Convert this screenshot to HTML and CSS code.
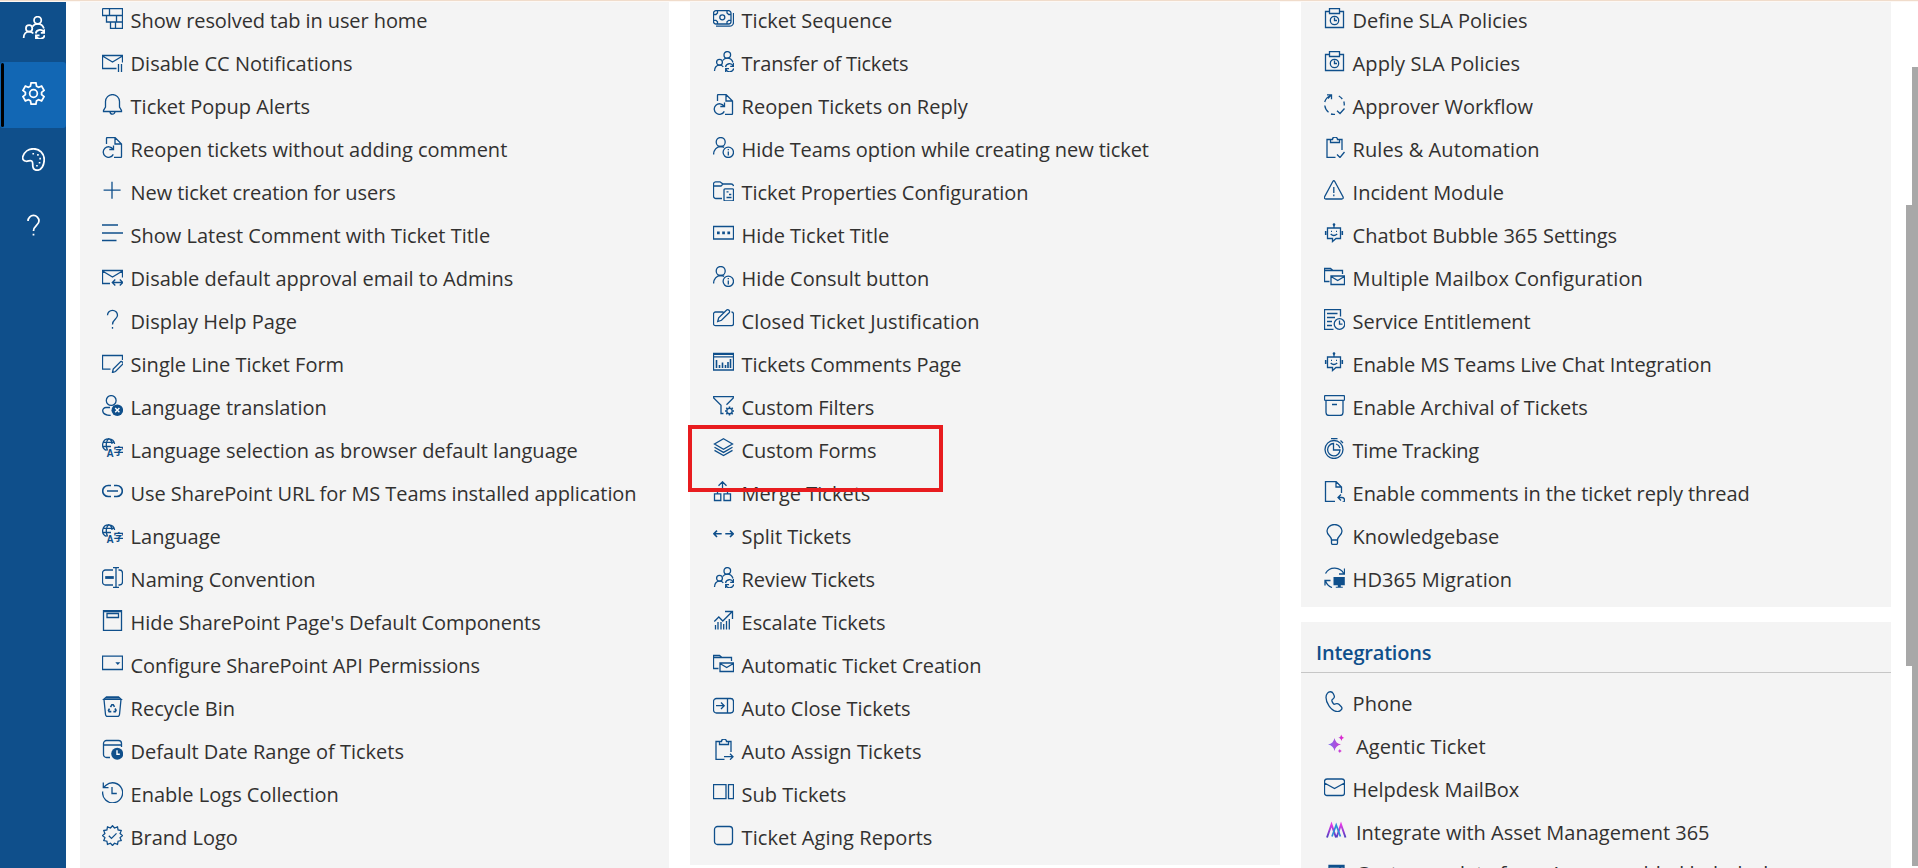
FILE: index.html
```html
<!DOCTYPE html>
<html lang="en">
<head>
<meta charset="utf-8">
<title>Settings</title>
<link rel="stylesheet" href="styles.css">
</head>
<body>
<svg class="sprite" aria-hidden="true">
  <defs>
    <linearGradient id="spark" x1="0" y1="0" x2="1" y2="0"><stop offset="0" stop-color="#7a6cf0"/><stop offset=".6" stop-color="#b846d8"/><stop offset="1" stop-color="#f012c8"/></linearGradient>
    <linearGradient id="asset" x1="0" y1="0" x2="0" y2="1"><stop offset="0" stop-color="#e23be6"/><stop offset="1" stop-color="#4a3fc0"/></linearGradient>
  </defs>
  <symbol id="cascade" viewBox="0 0 21 21"><path d="M.5.5h20v20H8.500V14M.5.500V7.500h20M7.500.500v7M4.500 7.500V14h16M14.500 7.500V14M13.500 14v6.500"/></symbol>
  <symbol id="mail-pause" viewBox="0 0 21 21"><path d="M14.500 17.500H.500v-13h20v7M.500 5l10 6 10-6M16.500 13v8M19.500 13v8"/></symbol>
  <symbol id="bell" viewBox="0 0 21 21"><path d="M10.500.600a7 7 0 0 0-7 7v5.500l-2 3.400v1h18v-1l-2-3.400V7.600a7 7 0 0 0-7-7zM8 17.500a2.500 2.700 0 0 0 5 0"/></symbol>
  <symbol id="reopen" viewBox="0 0 21 21"><path d="M4.500 7V1.500q0-1 1-1H13l6.500 6.500v12.500q0 1-1 1H12M13 .500V7h6.500M11.500 8.500v4H7.300M11 12.200a5.300 5.300 0 1 0 .300 5.200"/></symbol>
  <symbol id="plus" viewBox="0 0 21 21"><path d="M10 1.700v17M1.600 10.200h17"/></symbol>
  <symbol id="lines" viewBox="0 0 21 21"><path class="bold" d="M0 2h16M0 10h21M0 17.500h14.500"/></symbol>
  <symbol id="mail-arrows" viewBox="0 0 21 21"><path d="M8 17.500H.500v-13h20v7M.500 5l10 6 10-6M10.500 16.500h10M13.300 13.500l-3 3 3 3M17.800 13.500l3 3-3 3"/></symbol>
  <symbol id="help" viewBox="0 0 21 21"><path d="M5.500 6.300a5 5 0 0 1 10 0c0 4-5 4.200-5 9.200M10.500 18v1.700"/></symbol>
  <symbol id="form-edit" viewBox="0 0 21 21"><path d="M8.500 17.200H.500V3.500h20V8M10.500 20.500l.7-3.500 7.300-7.300a1.700 1.700 0 0 1 2.200 2.400L13.500 19.500z"/></symbol>
  <symbol id="user-x" viewBox="0 0 21 21"><circle cx="9.200" cy="5.500" r="4.900"/><path d="M8 12.500H4a3.300 3.300 0 0 0-3.300 3.400c.3 2.600 3.200 4.400 8 4.600"/><circle class="solid" cx="15.300" cy="15.200" r="5.800"/><path class="cut" d="M13.200 13.100l4.200 4.200M17.400 13.100l-4.200 4.200"/></symbol>
  <symbol id="translate" viewBox="0 0 21 21"><path d="M4.500 12.400A6 6 0 1 1 12.600 6M.700 4.300h11.600M.700 8.500h8.300M5.500 12.400C3.500 8 4 2.500 6.700.600M10 6c0-2.500-1-4.600-3.300-5.400"/><text class="glyph" x="4.500" y="19" font-size="10">A</text><text class="glyph" x="11.400" y="17" font-size="10.500">字</text></symbol>
  <symbol id="link" viewBox="0 0 21 21"><path class="bold" d="M9 4.500H6.200a5.500 5.500 0 0 0 0 11H9M12 4.500h2.800a5.500 5.500 0 0 1 0 11H12M5 10h11"/></symbol>
  <symbol id="rename" viewBox="0 0 21 21"><path d="M11 18H3.500a3 3 0 0 1-3-3V6a3 3 0 0 1 3-3H11M16.500 3h1a3 3 0 0 1 3 3v9a3 3 0 0 1-3 3h-1M14 .500v20M11 .500h6M11 20.500h6"/><path class="thick" d="M3.200 10.500h8.600"/></symbol>
  <symbol id="page" viewBox="0 0 21 21"><path d="M1.500.600h18v19.900h-18zM5 3.500h11.500v4H5zM2 1.500h17"/></symbol>
  <symbol id="combo" viewBox="0 0 21 21"><path d="M.500 3.200h20v13.300H.500z"/><path class="solid" d="M13.300 9.300h5l-2.500 2.700z"/></symbol>
  <symbol id="recycle" viewBox="0 0 21 21"><path d="M1.800 3.300L4.500.800h12l2.700 2.500zM2 3.500l1.500 15q.2 2 2 2h10q1.800 0 2-2l1.500-15M3 1.900h15"/><path class="bold" d="M8.500 11.200l1.400-2.500h1.300l1.300 2.200M13 12.500l1 1.800-.7 1.300h-1.900M9.300 15.600H7.100l-.6-1.300 1-1.700"/></symbol>
  <symbol id="date-clock" viewBox="0 0 21 21"><path d="M8 18.500H4.500a3 3 0 0 1-3-3v-11a3 3 0 0 1 3-3h12a3 3 0 0 1 3 3V8M1.500 6h18"/><circle class="solid" cx="15.200" cy="14.800" r="6"/><path class="cut" d="M15 11.300v3.900h2.800"/></symbol>
  <symbol id="history" viewBox="0 0 21 21"><path d="M.700 9.500A10 10 0 1 0 4 3.300L1.500 5.500M1.300.500V5.700H6.500M10 5v6.500h4.800"/></symbol>
  <symbol id="badge" viewBox="0 0 21 21"><path d="M10.500.700l2 2.300 3-1.100.6 3.100 3.100.6-1.100 3 2.300 2-2.300 2 1.100 3-3.100.6-.6 3.100-3-1.100-2 2.300-2-2.300-3 1.100-.6-3.100-3.100-.6 1.100-3-2.300-2 2.300-2-1.100-3 3.100-.6.600-3.100 3 1.100zM6.800 10.700l2.700 2.700 5-5"/></symbol>
  <symbol id="money" viewBox="0 0 21 21"><path d="M3 2.700h12.500a2.500 2.500 0 0 1 2.500 2.500v8.300a2.500 2.500 0 0 1-2.500 2.500H3A2.500 2.500 0 0 1 .500 13.500V5.200A2.500 2.500 0 0 1 3 2.700zM3 18.200h13.500a4 4 0 0 0 4-4V5M.500 6.500H3L4.500 5V2.700M18 6.500h-2.300L14 5V2.700M.500 12.300H3l1.500 1.500V16M18 12.300h-2.300L14 13.800V16"/><circle cx="9.300" cy="9.300" r="2.500"/></symbol>
  <symbol id="people-sync" viewBox="0 0 21 21"><circle cx="14.300" cy="3.900" r="3.300"/><circle cx="6.500" cy="11.300" r="2.900"/><path d="M1.500 20c0-3.600 2-5.800 5-5.800 1.700 0 3 .6 3.800 1.700M9.700 9.500c1-1.500 2.600-2.300 4.600-2.300 2.700 0 4.800 1.300 5.700 4.300M12.500 16a4.100 4.100 0 0 1 7.700-1M20.500 12v3.300h-3.300M20.700 17.500a4.100 4.100 0 0 1-7.700 1M12.700 21v-3.300H16"/></symbol>
  <symbol id="user-info" viewBox="0 0 21 21"><circle cx="7.700" cy="5" r="4.500"/><path d="M.600 17.500c0-4.500 3-8 7-8 1.400 0 2.500.2 3.500.9M15.300 14.500v4M15.300 12v1.300"/><circle cx="15.300" cy="15.300" r="5.200"/></symbol>
  <symbol id="folder-doc" viewBox="0 0 21 21"><path d="M9 18.500H3a2.500 2.500 0 0 1-2.500-2.500V4A2.300 2.300 0 0 1 3 1.800h4L10 4h8a2.500 2.500 0 0 1 2.500 2M.500 6H8l2-2M12 8.800h7.500q1 0 1 1v10q0 1-1 1H12q-1 0-1-1v-10q0-1 1-1zM13.500 11.800h2M16 14.500h2.300M13.500 17.500h5"/></symbol>
  <symbol id="textbox" viewBox="0 0 21 21"><path d="M.500 3.500h20V16H.500z"/><path class="solid" d="M4 8.500h2.700v2.700H4zM9.200 8.500h2.700v2.700H9.200zM14.400 8.500h2.700v2.700h-2.700z"/></symbol>
  <symbol id="note-edit" viewBox="0 0 21 21"><path d="M10.500 3H2.500a2 2 0 0 0-2 2v9.700a2 2 0 0 0 2 2h16a2 2 0 0 0 2-2V5a2 2 0 0 0-2-2M4.700 12.500l1-3.700 7.700-7.500a1.700 1.700 0 0 1 2.700 2.500L8.500 11.300z"/></symbol>
  <symbol id="report" viewBox="0 0 21 21"><path d="M.500 1.500h20v16.500H.500zM.500 4.800h20M1 2.300h19"/><path class="bold" d="M3.500 8v8M6.500 13v3M9.500 10.500V16M12.500 13v3M15 10v6M17.500 7v9"/></symbol>
  <symbol id="filter-gear" viewBox="0 0 21 21"><path d="M10.500 18.500H8v-8.200L.700 3V1.600h19.600V3l-6.800 6.800"/><circle cx="16.500" cy="16" r="2.700"/><path class="bold" d="M16.500 11.500v1.500M16.500 19v1.500M12 16h1.500M19.500 16H21M13.300 12.800l1.100 1.100M18.600 18.100l1.100 1.100M19.700 12.800l-1.100 1.100M14.400 18.100l-1.100 1.100"/></symbol>
  <symbol id="layers" viewBox="0 0 21 21"><path d="M10.500.800l9 5.200-9 5.200-9-5.200zM1.500 9.200l9 5.200 9-5.200M1.500 12.400l9 5.200 9-5.200"/></symbol>
  <symbol id="merge" viewBox="0 0 21 21"><path d="M9.500 1v7.500M5.500 4.800l4-4 4 4M4.500 13V10l5-3 5 3v3M1.500 12.800h6.300v6.700H1.500zM11 12.800h6.500v6.700H11z"/></symbol>
  <symbol id="split" viewBox="0 0 21 21"><path class="bold" d="M.900 9.800h7.800M4 6.600L.900 9.800 4 13M12.300 9.800h7.800M17 6.600l3.200 3.200L17 13"/></symbol>
  <symbol id="growth" viewBox="0 0 21 21"><path d="M1.300 11.500l4.500-4.500 4 4 9.300-9.300M12 1.500h7.500v7.500M2.500 15v4.500M5 12v7.500M8 12v7.500M10.700 14v5.500M13.500 11v8.500M16.300 9v10.500"/></symbol>
  <symbol id="folder-mail" viewBox="0 0 21 21"><path d="M5.500 15.500H.500v-13h6L9 4.500h9.500V8M.500 4.500H9M7 10h13.500v8.500H7zM7 10.500l6.700 4 6.700-4"/></symbol>
  <symbol id="panel-in" viewBox="0 0 21 21"><path d="M3.500 2.500h14a3 3 0 0 1 3 3V14a3 3 0 0 1-3 3h-14a3 3 0 0 1-3-3V5.500a3 3 0 0 1 3-3zM14.500 2.500V17M3 9.700h8M8 6.500l3.200 3.200L8 13"/></symbol>
  <symbol id="clip-arrow" viewBox="0 0 21 21"><path d="M18 13V2.500h-4.500a2.500 2.500 0 0 0-5 0H3v18h8.500M6.500 3v2.500h9V3M11 17.700h8.500M17 14.700l3 3-3 3"/></symbol>
  <symbol id="panes" viewBox="0 0 21 21"><path d="M.500 2.700h12.500v14H.500zM15.500 2.700h5v14h-5z"/></symbol>
  <symbol id="box" viewBox="0 0 21 21"><rect x="1.500" y="1.500" width="18" height="18" rx="3"/></symbol>
  <symbol id="sla" viewBox="0 0 21 21"><path d="M5 3.500H1.500v16h18v-16H16M5.500.500h10v5h-10zM10.500 9.500v3h2.500"/><circle cx="10.500" cy="12.500" r="4.200"/></symbol>
  <symbol id="workflow" viewBox="0 0 21 21"><path d="M7 1.500A10 10 0 0 0 .700 8M3 .800h4.500V5.300M7.300.900L4 4.500M.800 11.500a10 10 0 0 0 3.700 6.700M7 20a10 10 0 0 0 4 .3M14.800 2a10 10 0 0 1 3.500 3M19.800 7.500a10 10 0 0 1 .400 4M13 16.800l3 2.700 4.500-5"/></symbol>
  <symbol id="clip-check" viewBox="0 0 21 21"><path d="M18 13V2.500h-4.500a2.500 2.500 0 0 0-5 0H3v18h8.500M6.500 3v2.500h9V3M13 17.500l3 3 4.500-5.500"/></symbol>
  <symbol id="warning" viewBox="0 0 21 21"><path d="M8.800 1.500q1-1.500 2 0l8.300 15.500q.5 2-1.300 2H1.800q-1.800 0-1.300-2zM9.800 7v6M9.800 14.500v1.700"/></symbol>
  <symbol id="bot" viewBox="0 0 21 21"><path d="M3.500 5h13v10.500h-4.500l-3.500 3v-3h-5zM10 4.500V1.500M6.700 11q3 3 6.500 0M7 8.300h1M12 8.300h1"/><path class="bold" d="M1.700 8v4M18.300 8v4"/><circle class="solid" cx="10" cy="1.600" r="1.300"/></symbol>
  <symbol id="doc-clock" viewBox="0 0 21 21"><path d="M9.500 20.500H.500V.500h16v7M3 4.500h10.500M3 8.500h8M3 12.500h5M3 16.500h5M15.500 11.500v3.700h3"/><circle cx="15.500" cy="15" r="5.300"/></symbol>
  <symbol id="archive" viewBox="0 0 21 21"><path d="M1.500.600h18q1 0 1 1v2.800q0 1-1 1h-18q-1 0-1-1V1.600q0-1 1-1zM2 5.500v12a3 3 0 0 0 3 3h11a3 3 0 0 0 3-3v-12M8 9.500h5"/></symbol>
  <symbol id="stopwatch" viewBox="0 0 21 21"><circle cx="10" cy="11.500" r="9"/><path d="M9.500 5.500a6.200 6.200 0 1 0 6.500 6.500H9.500zM7 .600h6.500M16.500 2.500L19 5M12 6a6 6 0 0 1 4 4"/></symbol>
  <symbol id="doc-reply" viewBox="0 0 21 21"><path d="M11 20.500H1.500V.500H12L17.500 6v6M12 .500V6h5.500M17 13.500l-3 3 3 3M14 16.500h4q2.500 0 2.500 2.500t-2 2"/></symbol>
  <symbol id="bulb" viewBox="0 0 21 21"><path d="M7.500 16c0-4-4.500-4.500-4.500-9a7.500 6.500 0 0 1 15 0c0 4.500-4.500 5-4.500 9zM7.500 16v3q0 1.500 1.500 1.500h3q1.500 0 1.500-1.500v-3"/></symbol>
  <symbol id="migrate" viewBox="0 0 21 21"><path d="M1.500 6.500A10.500 10.500 0 0 1 20 7M20.500 1.500V7H15M1 18.500V13.500h5.500M1.500 14q2 5 6.500 6.500"/><path class="solid" d="M9.500 10h11.300v8.300h-4v1.500h2v1h-7v-1h2v-1.500H9.500z"/></symbol>
  <symbol id="phone" viewBox="0 0 21 21"><path d="M3.500 2.200C5 .200 8 .200 9.200 2.500l1 2.200q.7 2-1 3L8 8.800c-.5 1 .8 3.700 2.200 4.600l2.200-.7q1.300-.5 2.500.6l2.400 2.400q1.300 1.500 0 3-2 2.500-5 1.800C6.500 19.200 2 11.500 2 6.500q0-2.500 1.500-4.300z"/></symbol>
  <symbol id="mail" viewBox="0 0 21 21"><path d="M3 2h15a2.500 2.500 0 0 1 2.500 2.500V16A2.500 2.500 0 0 1 18 18.500H3A2.500 2.500 0 0 1 .500 16V4.500A2.500 2.500 0 0 1 3 2zM.500 6l10 5.500L20.500 6"/></symbol>
  <symbol id="sparkle" viewBox="0 0 21 21"><path fill="url(#spark)" stroke="none" d="M8.500 4q1 5.500 6.500 6.500-5.500 1-6.500 6.500Q7.500 11.500 2 10.500q5.500-1 6.500-6.500zM15.300.500q.5 3 3 3.200-2.500.3-3 3.200-.5-3-3-3.200 2.500-.3 3-3.200zM13.800 15q.4 1.700 2 2-1.600.3-2 2-.4-1.700-2-2 1.600-.3 2-2z"/></symbol>
  <symbol id="asset-mgmt" viewBox="0 0 21 21"><path fill="none" stroke="url(#asset)" stroke-width="1.900" d="M1 17.500L5.500 4.500 10 17.500M10.500 17.500L15 4.500l4.500 13"/><path fill="none" stroke="#2c8fd8" stroke-width="1.700" d="M6 16.500L10.200 5l4.200 11.500"/></symbol>
  <symbol id="table" viewBox="0 0 21 21"><path d="M3 2.500h15v17H3zM3 4h15M12 7l4-4"/></symbol>
  <symbol id="gear" viewBox="0 0 21 21"><circle cx="10.500" cy="10.500" r="3.500"/><path d="M8.300.900h4.400l.6 2.900 1.800 1 2.800-1 2.200 3.800-2.200 1.900v2l2.200 1.900-2.200 3.800-2.800-1-1.800 1-.6 2.900H8.300l-.6-2.900-1.800-1-2.800 1L.900 13.400l2.200-1.900v-2L.900 7.600l2.200-3.800 2.800 1 1.800-1z"/></symbol>
  <symbol id="palette" viewBox="0 0 21 21"><path d="M.700 8C2 3.500 6 .700 10.500.700c5.500 0 9.800 4.300 9.800 9.800 0 5-2.500 9.800-6.500 9.800-2.500 0-4-2-4-4.500 0-1.500.3-3-1-4-1.500-1-3 .500-5 .300C1.300 11.800.200 10 .700 8z"/><path class="solid" d="M9.500 4.500h1.500v1.500H9.500zM13.800 5.500h1.500V7h-1.500zM15.800 9h1.500v1.500h-1.500zM15.300 12.700h1.500v1.500h-1.500zM12.900 15.500h1.500V17h-1.500z"/></symbol>
</svg>

<div class="top-strip"></div>
<div class="app">
  <nav class="sidebar">
    <a class="nav-item"><svg><use href="#people-sync"/></svg></a>
    <a class="nav-item active"><svg><use href="#gear"/></svg></a>
    <a class="nav-item"><svg><use href="#palette"/></svg></a>
    <a class="nav-item"><svg><use href="#help"/></svg></a>
  </nav>
  <main class="columns">
    <div class="column">
      <ul class="panel panel-first grow">
        <li><svg><use href="#cascade"/></svg><span class="tight">Show resolved tab in user home</span></li>
        <li><svg><use href="#mail-pause"/></svg><span>Disable CC Notifications</span></li>
        <li><svg><use href="#bell"/></svg><span>Ticket Popup Alerts</span></li>
        <li><svg><use href="#reopen"/></svg><span>Reopen tickets without adding comment</span></li>
        <li><svg><use href="#plus"/></svg><span class="tight">New ticket creation for users</span></li>
        <li><svg><use href="#lines"/></svg><span>Show Latest Comment with Ticket Title</span></li>
        <li><svg><use href="#mail-arrows"/></svg><span>Disable default approval email to Admins</span></li>
        <li><svg><use href="#help"/></svg><span>Display Help Page</span></li>
        <li><svg><use href="#form-edit"/></svg><span>Single Line Ticket Form</span></li>
        <li><svg><use href="#user-x"/></svg><span>Language translation</span></li>
        <li><svg><use href="#translate"/></svg><span>Language selection as browser default language</span></li>
        <li><svg><use href="#link"/></svg><span class="tight">Use SharePoint URL for MS Teams installed application</span></li>
        <li><svg><use href="#translate"/></svg><span>Language</span></li>
        <li><svg><use href="#rename"/></svg><span>Naming Convention</span></li>
        <li><svg><use href="#page"/></svg><span class="tight">Hide SharePoint Page's Default Components</span></li>
        <li><svg><use href="#combo"/></svg><span class="tight">Configure SharePoint API Permissions</span></li>
        <li><svg><use href="#recycle"/></svg><span>Recycle Bin</span></li>
        <li><svg><use href="#date-clock"/></svg><span>Default Date Range of Tickets</span></li>
        <li><svg><use href="#history"/></svg><span>Enable Logs Collection</span></li>
        <li><svg><use href="#badge"/></svg><span>Brand Logo</span></li>
      </ul>
    </div>
    <div class="column">
      <ul class="panel">
        <li><svg><use href="#money"/></svg><span>Ticket Sequence</span></li>
        <li><svg><use href="#people-sync"/></svg><span class="tighter">Transfer of Tickets</span></li>
        <li><svg><use href="#reopen"/></svg><span>Reopen Tickets on Reply</span></li>
        <li><svg><use href="#user-info"/></svg><span class="tight">Hide Teams option while creating new ticket</span></li>
        <li><svg><use href="#folder-doc"/></svg><span class="tight">Ticket Properties Configuration</span></li>
        <li><svg><use href="#textbox"/></svg><span>Hide Ticket Title</span></li>
        <li><svg><use href="#user-info"/></svg><span>Hide Consult button</span></li>
        <li><svg><use href="#note-edit"/></svg><span class="loose">Closed Ticket Justification</span></li>
        <li><svg><use href="#report"/></svg><span class="tight">Tickets Comments Page</span></li>
        <li><svg><use href="#filter-gear"/></svg><span class="tight">Custom Filters</span></li>
        <li class="marked"><svg><use href="#layers"/></svg><span class="tight">Custom Forms</span></li>
        <li><svg><use href="#merge"/></svg><span>Merge Tickets</span></li>
        <li><svg><use href="#split"/></svg><span>Split Tickets</span></li>
        <li><svg><use href="#people-sync"/></svg><span class="tight">Review Tickets</span></li>
        <li><svg><use href="#growth"/></svg><span class="tight">Escalate Tickets</span></li>
        <li><svg><use href="#folder-mail"/></svg><span>Automatic Ticket Creation</span></li>
        <li><svg><use href="#panel-in"/></svg><span>Auto Close Tickets</span></li>
        <li><svg><use href="#clip-arrow"/></svg><span class="loose">Auto Assign Tickets</span></li>
        <li><svg><use href="#panes"/></svg><span>Sub Tickets</span></li>
        <li><svg><use href="#box"/></svg><span class="loose">Ticket Aging Reports</span></li>
      </ul>
    </div>
    <div class="column">
      <ul class="panel">
        <li><svg><use href="#sla"/></svg><span>Define SLA Policies</span></li>
        <li><svg><use href="#sla"/></svg><span class="loose">Apply SLA Policies</span></li>
        <li><svg><use href="#workflow"/></svg><span>Approver Workflow</span></li>
        <li><svg><use href="#clip-check"/></svg><span class="loose">Rules &amp; Automation</span></li>
        <li><svg><use href="#warning"/></svg><span>Incident Module</span></li>
        <li><svg><use href="#bot"/></svg><span>Chatbot Bubble 365 Settings</span></li>
        <li><svg><use href="#folder-mail"/></svg><span class="loose">Multiple Mailbox Configuration</span></li>
        <li><svg><use href="#doc-clock"/></svg><span class="tight">Service Entitlement</span></li>
        <li><svg><use href="#bot"/></svg><span class="tight">Enable MS Teams Live Chat Integration</span></li>
        <li><svg><use href="#archive"/></svg><span>Enable Archival of Tickets</span></li>
        <li><svg><use href="#stopwatch"/></svg><span class="tighter">Time Tracking</span></li>
        <li><svg><use href="#doc-reply"/></svg><span class="tight">Enable comments in the ticket reply thread</span></li>
        <li><svg><use href="#bulb"/></svg><span>Knowledgebase</span></li>
        <li><svg><use href="#migrate"/></svg><span class="loose">HD365 Migration</span></li>
      </ul>
      <section class="integrations">
        <h2>Integrations</h2>
        <ul class="panel">
          <li><svg><use href="#phone"/></svg><span>Phone</span></li>
          <li class="app-link"><svg><use href="#sparkle"/></svg><span class="loose">Agentic Ticket</span></li>
          <li><svg><use href="#mail"/></svg><span>Helpdesk MailBox</span></li>
          <li class="app-link"><svg><use href="#asset-mgmt"/></svg><span>Integrate with Asset Management 365</span></li>
          <li class="app-link last"><svg><use href="#table"/></svg><span>Customer data from Azure enabled helpdesk</span></li>
        </ul>
      </section>
    </div>
  </main>
  <div class="scroll"><div class="track"></div><div class="thumb"></div><div class="track track-end"></div></div>
</div>
</body>
</html>
```

FILE: styles.css
```css
*, *::before, *::after { box-sizing: border-box; }
body {
  margin: 0;
  height: 868px;
  overflow: hidden;
  background: #fff;
  color: #323130;
  font: 20px/1 "Segoe UI", "Open Sans", "Noto Sans", sans-serif;
}
.sprite { position: absolute; width: 0; height: 0; }
.top-strip { height: 2px; background: #fdf8f4; border-top: 1px solid #f0dccb; }
.app { display: flex; height: 866px; overflow: hidden; }

svg { fill: none; stroke: currentColor; stroke-width: 1.3; }
.solid { fill: currentColor; stroke: none; }
.cut { stroke: #fff; stroke-width: 1.4; }
.bold { stroke-width: 1.6; }
.thick { stroke-width: 2.8; }
.glyph { fill: currentColor; stroke: none; font-family: "Liberation Sans", "Noto Sans CJK SC", sans-serif; font-weight: 700; }

.sidebar { width: 66px; flex: none; background: #0f4f8b; color: #fff; }
.nav-item { display: flex; height: 66px; align-items: center; justify-content: center; padding: 0 0 3px 1px; }
.nav-item:first-child { height: 60px; padding-bottom: 9px; }
.nav-item svg { width: 23px; height: 23px; stroke-width: 1.6; }
.nav-item.active { background: #1267b4; border-radius: 3px; position: relative; }
.nav-item.active::before { content: ""; position: absolute; left: 1px; top: 1px; width: 3px; height: 64px; background: #000; border-radius: 2px; }

.columns { display: grid; grid-template-columns: 589px 590px 590px; gap: 21px; padding-left: 14px; flex: none; align-items: start; }
.column { display: flex; flex-direction: column; gap: 15px; }
.panel { list-style: none; margin: -2px 0 0; padding: 0 0 5px 23px; background: #f4f4f4; }
.panel-first { padding-left: 22px; }
.panel.grow { min-height: 880px; }
.panel li { display: flex; height: 43px; align-items: flex-start; position: relative; }
.panel li svg { width: 21px; height: 21px; margin: 8px 7.6px 0 0; flex: none; color: #0f4f8b; }
.panel li span { line-height: 41px; white-space: nowrap; }
.panel li .tight { letter-spacing: -.08px; }
.panel li .tighter { letter-spacing: -.25px; }
.panel li .loose { letter-spacing: .08px; }
.panel li.app-link svg { margin: 8px 9px 0 2px; }
.panel li.last span { margin-top: -2px; }
.marked::after { content: ""; position: absolute; left: -25px; top: -5px; width: 255px; height: 67px; border: 4.700px solid #e81c1f; z-index: 1; }
.integrations { background: #f4f4f4; }
.integrations h2 { margin: 0; height: 51px; padding-left: 15px; border-bottom: 1px solid #c6c6c6; color: #0f4f8b; font-size: 20px; font-weight: 600; line-height: 61px; letter-spacing: -.2px; }
.integrations .panel { margin: 0; padding-top: 10px; }

.scroll { margin-left: auto; width: 12px; display: flex; flex-direction: column; align-items: flex-end; padding-top: 65px; }
.track { width: 6px; height: 138px; background: #a8a8a8; }
.thumb { width: 12px; height: 461px; background: #a8a8a8; }
.track-end { height: 200px; }
```
